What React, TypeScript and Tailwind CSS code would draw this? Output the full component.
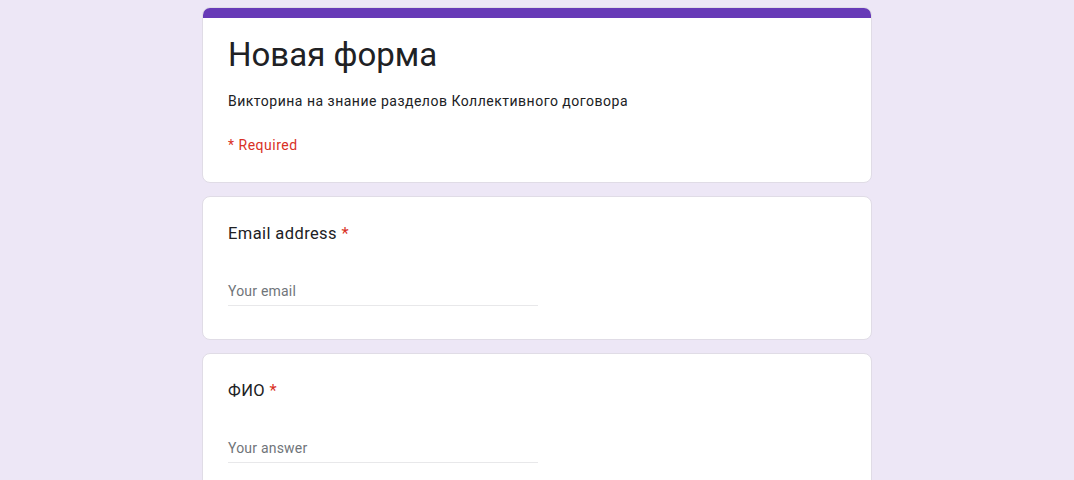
export default function App() {
    return (
        <div className="min-h-screen bg-[#ede7f6] flex justify-center pt-[7px]" style={{ fontFamily: 'Roboto, "Liberation Sans", sans-serif' }}>
            <div className="w-[670px] flex flex-col gap-[13px]">
                {/* Header card */}
                <div className="bg-white rounded-lg border border-[#e0dce6] overflow-hidden">
                    <div className="h-[10px] bg-[#673ab7]" />
                    <div className="px-[25px] pt-[17px] pb-[27px]">
                        <h1 className="text-[33px] leading-[40px] text-[#202124]">Новая форма</h1>
                        <p className="mt-[16px] text-[14px] leading-5 tracking-[0.5px] text-[#202124]">
                            Викторина на знание разделов Коллективного договора
                        </p>
                        <p className="mt-[24px] text-[14px] leading-5 tracking-[0.5px] text-[#d93025]">* Required</p>
                    </div>
                </div>

                {/* Email */}
                <Question label="Email address" placeholder="Your email" />

                {/* ФИО */}
                <Question label="ФИО" placeholder="Your answer" />
            </div>
        </div>
    );
}

function Question({ label, placeholder }: { label: string; placeholder: string }) {
    return (
        <div className="bg-white rounded-lg border border-[#e0dce6] px-[25px] pt-[25px] pb-[33px]">
            <div className="text-[16.5px] leading-6 tracking-[0.4px] text-[#202124]">
                {label} <span className="text-[#d93025]">*</span>
            </div>
            <div className="mt-[35px] w-[310px] border-b border-[#e8e8ea] pb-[4px] text-[14px] leading-5 text-[#70757a] tracking-[0.2px]">
                {placeholder}
            </div>
        </div>
    );
}
